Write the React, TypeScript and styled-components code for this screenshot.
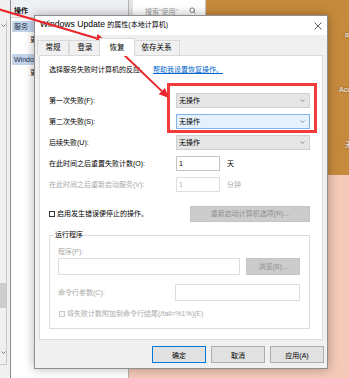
import React from 'react';
import styled, { createGlobalStyle } from 'styled-components';
import { Search } from 'lucide-react';

const FONT = `"Liberation Sans", "Noto Sans CJK SC", sans-serif`;

const GlobalStyle = createGlobalStyle`
  html, body {
    margin: 0;
    padding: 0;
  }
  body {
    width: 349px;
    height: 378px;
    overflow: hidden;
    font-family: ${FONT};
  }
`;

const Desktop = styled.div`
  position: relative;
  width: 349px;
  height: 378px;
  overflow: hidden;
  background: #f4c9b8;
`;

const Wallpaper = styled.div`
  position: absolute;
  left: 206px;
  top: 0;
  width: 143px;
  height: 175px;
  background: #c68a3c;
`;

const IconLabel = styled.span<{ $x: number; $y: number }>`
  position: absolute;
  left: ${p => p.$x}px;
  top: ${p => p.$y}px;
  font-size: 7px;
  line-height: 9px;
  color: #fff;
  text-shadow: 0 0 2px rgba(0, 0, 0, 0.6);
  white-space: nowrap;
`;

/* services console behind the dialog */
const MmcWindow = styled.div`
  position: absolute;
  left: 0;
  top: 0;
  width: 129px;
  height: 378px;
  box-sizing: border-box;
  display: flex;
  background: #fff;
  border-right: 1px solid #b4b4b4;
`;

const TreePane = styled.div`
  width: 11px;
  flex: none;
  box-sizing: border-box;
  background: #f0f0f0;
  border-right: 1px solid #8e8e8e;
`;

const ScrollTrack = styled.div`
  width: 7px;
  height: 345px;
  margin-top: 20px;
  box-sizing: border-box;
  border-right: 1px solid #c9c9c9;
  border-bottom: 1px solid #c9c9c9;
  display: flex;
  flex-direction: column;
  align-items: center;
  padding: 4px 0 10px;
`;

const ScrollThumb = styled.div`
  width: 6px;
  height: 25px;
  margin-top: auto;
  margin-bottom: 43px;
  background: #cdcdcd;
`;

const ActionPane = styled.div`
  flex: 1;
  display: flex;
  flex-direction: column;
  min-width: 0;
  font-size: 7px;
  line-height: 11px;
  white-space: nowrap;
`;

const ActionHeader = styled.div`
  height: 18px;
  box-sizing: border-box;
  padding: 5px 0 0 3px;
  background: #eef0f3;
  border-bottom: 1px solid #d6d6d6;
  color: #111;
  font-weight: bold;
`;

const ActionGroup = styled.div<{ $gap: number }>`
  height: 11px;
  margin: ${p => p.$gap}px 0 0 1px;
  padding-left: 2px;
  overflow: hidden;
  background: #c3d4ea;
  color: #1b2a44;
`;

/* only the first glyph peeks out from under the dialog */
const ActionItem = styled.div`
  height: 11px;
  margin-top: 2px;
  padding-left: 19px;
  color: #222;
`;

const SearchStrip = styled.div`
  position: absolute;
  left: 129px;
  top: 0;
  width: 77px;
  height: 20px;
  box-sizing: border-box;
  background: #fff;
  border-left: 4px solid #e4e4e4;
  border-right: 1px solid #c8c8c8;
  display: flex;
  align-items: flex-start;
  justify-content: space-between;
  padding: 7px 9px 0 12px;
  font-size: 7px;
  line-height: 9px;
  color: #9a9a9a;
`;

/* properties dialog */
const Dialog = styled.div`
  position: absolute;
  left: 34px;
  top: 15px;
  width: 294px;
  height: 354px;
  box-sizing: border-box;
  display: flex;
  flex-direction: column;
  background: #f0f0f0;
  border: 1px solid #8f8f8f;
  box-shadow: 0 0 10px rgba(0, 0, 0, 0.3);
  color: #000;
`;

const TitleBar = styled.div`
  height: 19px;
  flex: none;
  box-sizing: border-box;
  display: flex;
  align-items: flex-start;
  justify-content: space-between;
  padding: 2px 5px 0 5px;
  background: #fff;
`;

const TitleText = styled.span`
  font-size: 7px;
  line-height: 12px;
  white-space: nowrap;
`;

const TitleLatin = styled.span`
  font-size: 8.6px;
`;

const CloseIcon = styled.svg`
  margin-top: 4px;
`;

const Body = styled.div`
  flex: 1;
  display: flex;
  flex-direction: column;
  padding: 0 4px;
  min-height: 0;
`;

const TabBar = styled.div`
  height: 20px;
  flex: none;
  display: flex;
  align-items: flex-end;
  margin-left: -2px;
  position: relative;
  z-index: 1;
`;

const Tab = styled.div<{ $active?: boolean }>`
  box-sizing: border-box;
  height: ${p => (p.$active ? 18 : 15)}px;
  line-height: ${p => (p.$active ? 17 : 14)}px;
  padding: 0 ${p => (p.$active ? 9.5 : 7.5)}px;
  margin: 0 ${p => (p.$active ? -2 : 0)}px ${p => (p.$active ? -1 : 0)}px;
  font-size: 7.5px;
  white-space: nowrap;
  background: ${p => (p.$active ? '#fff' : '#f0f0f0')};
  border: 1px solid #d9d9d9;
  border-bottom: none;
  position: relative;
  z-index: ${p => (p.$active ? 2 : 1)};
`;

const TabPage = styled.div`
  flex: 1;
  box-sizing: border-box;
  display: flex;
  flex-direction: column;
  padding: 9px 12px 0 9px;
  background: #fff;
  border: 1px solid #d9d9d9;
  font-size: 7px;
  line-height: 10px;
`;

const Intro = styled.div`
  white-space: nowrap;
`;

const HelpLink = styled.a`
  margin-left: 6px;
  color: #0066cc;
  text-decoration: underline;
`;

const FormGrid = styled.div`
  display: grid;
  grid-template-columns: 127px 1fr;
  grid-auto-rows: 15px;
  row-gap: 6px;
  align-items: center;
  margin-top: 18px;
`;

const FieldLabel = styled.span<{ $disabled?: boolean }>`
  white-space: nowrap;
  color: ${p => (p.$disabled ? '#a8a8a8' : '#000')};
`;

const Select = styled.div<{ $focused?: boolean }>`
  height: 15px;
  box-sizing: border-box;
  display: flex;
  align-items: center;
  justify-content: space-between;
  padding: 0 4px 0 2px;
  background: ${p => (p.$focused ? '#e5f1fb' : '#e5e5e5')};
  border: 1px solid ${p => (p.$focused ? '#7eb4ea' : '#cfcfcf')};
`;

const InputRow = styled.div`
  display: flex;
  align-items: center;
  gap: 7px;
`;

const TextBox = styled.div<{ $disabled?: boolean; $width?: number; $height?: number }>`
  box-sizing: border-box;
  height: ${p => p.$height ?? 15}px;
  width: ${p => (p.$width ? `${p.$width}px` : 'auto')};
  flex: ${p => (p.$width ? 'none' : 1)};
  padding-left: 2px;
  display: flex;
  align-items: center;
  background: #fff;
  border: 1px solid ${p => (p.$disabled ? '#dedede' : '#c4c4c4')};
  color: ${p => (p.$disabled ? '#b0b0b0' : '#000')};
`;

const Unit = styled.span<{ $disabled?: boolean }>`
  color: ${p => (p.$disabled ? '#a8a8a8' : '#000')};
`;

const OptionRow = styled.div`
  display: flex;
  align-items: center;
  justify-content: space-between;
  margin-top: 14px;
`;

const CheckLabel = styled.label<{ $disabled?: boolean }>`
  display: flex;
  align-items: center;
  gap: 2px;
  white-space: nowrap;
  color: ${p => (p.$disabled ? '#a8a8a8' : '#000')};
`;

const CheckBox = styled.span<{ $disabled?: boolean }>`
  width: 6px;
  height: 6px;
  box-sizing: border-box;
  border: 1px solid ${p => (p.$disabled ? '#c8c8c8' : '#333')};
  background: ${p => (p.$disabled ? '#f6f6f6' : '#fff')};
`;

const PushButton = styled.div<{ $width: number; $height?: number; $disabled?: boolean; $default?: boolean }>`
  width: ${p => p.$width}px;
  height: ${p => p.$height ?? 17}px;
  box-sizing: border-box;
  display: flex;
  align-items: center;
  justify-content: center;
  flex: none;
  font-size: 7px;
  white-space: nowrap;
  background: ${p => (p.$disabled ? '#cccccc' : '#e1e1e1')};
  color: ${p => (p.$disabled ? '#8f8f8f' : '#000')};
  border: 1px solid
    ${p => (p.$default ? '#0078d7' : p.$disabled ? '#c4c4c4' : '#adadad')};
`;

const GroupBox = styled.fieldset`
  margin: 8px 0 0;
  padding: 0 9px 9px 8px;
  min-width: 0;
  border: 1px solid #dcdcdc;
  display: flex;
  flex-direction: column;
`;

const Legend = styled.legend`
  padding: 0 1px;
  margin-left: -4px;
  font-size: 7px;
  line-height: 10px;
`;

const GroupLabel = styled.span<{ $top?: number }>`
  margin-top: ${p => p.$top ?? 7}px;
  color: #a8a8a8;
  white-space: nowrap;
`;

const ProgramRow = styled.div`
  display: flex;
  gap: 6px;
  margin-top: 1px;
`;

const ArgsRow = styled.div`
  display: flex;
  align-items: center;
  justify-content: space-between;
  margin-top: 9px;
`;

const AppendRow = styled.div`
  margin: 8px 0 0 1px;
`;

const Footer = styled.div`
  height: 28px;
  flex: none;
  box-sizing: border-box;
  display: flex;
  justify-content: flex-end;
  gap: 5px;
  padding: 6px 3px 0;
`;

/* annotation layer */
const RedBox = styled.div`
  position: absolute;
  left: 167px;
  top: 83px;
  width: 150px;
  height: 50px;
  box-sizing: border-box;
  border: 3px solid #f43b3b;
`;

const ArrowLayer = styled.svg`
  position: absolute;
  left: 0;
  top: 0;
  pointer-events: none;
`;

const Chevron = ({ color = '#777' }: { color?: string }) => (
  <svg width="5" height="3" viewBox="0 0 5 3">
    <polyline points="0.5,0.5 2.5,2.5 4.5,0.5" fill="none" stroke={color} strokeWidth="0.8" />
  </svg>
);

const failureRows = [
  { label: '第一次失败(F):', focused: false },
  { label: '第二次失败(S):', focused: true },
  { label: '后续失败(U):', focused: false },
];

const tabs = ['常规', '登录', '恢复', '依存关系'];

const App = () => (
  <Desktop>
    <GlobalStyle />

    <Wallpaper>
      <IconLabel $x={139} $y={30}>ad</IconLabel>
      <IconLabel $x={133} $y={85}>Acce</IconLabel>
      <IconLabel $x={139} $y={140}>无线</IconLabel>
    </Wallpaper>

    <MmcWindow>
      <TreePane>
        <ScrollTrack>
          <Chevron color="#606060" />
          <ScrollThumb />
          <Chevron color="#606060" />
        </ScrollTrack>
      </TreePane>
      <ActionPane>
        <ActionHeader>操作</ActionHeader>
        <ActionGroup $gap={3}>服务</ActionGroup>
        <ActionItem>更</ActionItem>
        <ActionGroup $gap={9}>Windows Update</ActionGroup>
        <ActionItem>更</ActionItem>
      </ActionPane>
    </MmcWindow>

    <SearchStrip>
      <span>搜索"使用"</span>
      <Search size={7} strokeWidth={2.5} color="#555" />
    </SearchStrip>

    <Dialog>
      <TitleBar>
        <TitleText>
          <TitleLatin>Windows Update </TitleLatin>的属性(本地计算机)
        </TitleText>
        <CloseIcon width="8" height="8" viewBox="0 0 8 8">
          <path d="M0.5 0.5 L7.5 7.5 M7.5 0.5 L0.5 7.5" stroke="#333" strokeWidth="0.8" />
        </CloseIcon>
      </TitleBar>

      <Body>
        <TabBar>
          {tabs.map(t => (
            <Tab key={t} $active={t === '恢复'}>
              {t}
            </Tab>
          ))}
        </TabBar>

        <TabPage>
          <Intro>
            选择服务失败时计算机的反应。<HelpLink>帮助我设置恢复操作。</HelpLink>
          </Intro>

          <FormGrid>
            {failureRows.map(row => (
              <React.Fragment key={row.label}>
                <FieldLabel>{row.label}</FieldLabel>
                <Select $focused={row.focused}>
                  <span>无操作</span>
                  <Chevron />
                </Select>
              </React.Fragment>
            ))}
            <FieldLabel>在此时间之后重置失败计数(O):</FieldLabel>
            <InputRow>
              <TextBox $width={44}>1</TextBox>
              <Unit>天</Unit>
            </InputRow>
            <FieldLabel $disabled>在此时间之后重新启动服务(V):</FieldLabel>
            <InputRow>
              <TextBox $width={44} $disabled>
                1
              </TextBox>
              <Unit $disabled>分钟</Unit>
            </InputRow>
          </FormGrid>

          <OptionRow>
            <CheckLabel>
              <CheckBox />
              启用发生错误便停止的操作。
            </CheckLabel>
            <PushButton $width={120} $height={16} $disabled>
              重新启动计算机选项(R)...
            </PushButton>
          </OptionRow>

          <GroupBox>
            <Legend>运行程序</Legend>
            <GroupLabel>程序(P):</GroupLabel>
            <ProgramRow>
              <TextBox $disabled $height={17} />
              <PushButton $width={54} $disabled>
                浏览(B)...
              </PushButton>
            </ProgramRow>
            <ArgsRow>
              <GroupLabel $top={0}>命令行参数(C):</GroupLabel>
              <TextBox $width={125} $height={17} $disabled />
            </ArgsRow>
            <AppendRow>
              <CheckLabel $disabled>
                <CheckBox $disabled />
                将失败计数附加到命令行结尾(/fail=%1%)(E)
              </CheckLabel>
            </AppendRow>
          </GroupBox>
        </TabPage>
      </Body>

      <Footer>
        <PushButton $width={54} $default>
          确定
        </PushButton>
        <PushButton $width={54}>取消</PushButton>
        <PushButton $width={54}>应用(A)</PushButton>
      </Footer>
    </Dialog>

    <RedBox />

    <ArrowLayer width="349" height="378" viewBox="0 0 349 378">
      <line x1="-2" y1="9" x2="96.4" y2="38.2" stroke="#e8262b" strokeWidth="2" />
      <polygon points="106,41 95.1,42.5 97.7,33.9" fill="#e8262b" />
      <line x1="119" y1="50" x2="161.8" y2="91.1" stroke="#e8262b" strokeWidth="2" />
      <polygon points="169,98 158.7,94.3 164.9,87.9" fill="#e8262b" />
    </ArrowLayer>
  </Desktop>
);

export default App;
